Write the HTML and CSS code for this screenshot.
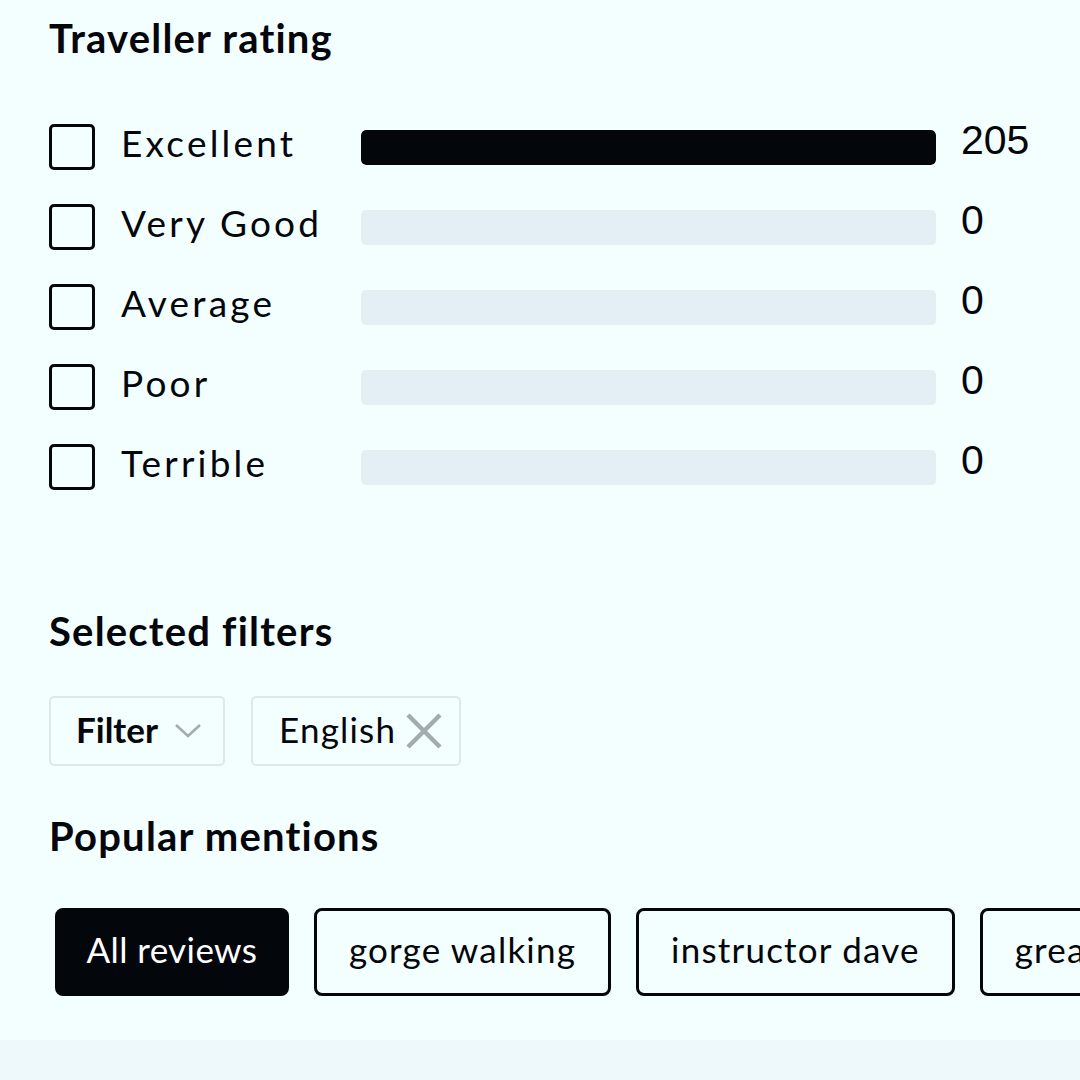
FILE: index.html
```html
<!DOCTYPE html>
<html lang="en">
<head>
<meta charset="utf-8">
<title>Traveller rating</title>
<link rel="stylesheet" href="styles.css">
</head>
<body>
<div class="page">
  <section class="panel">
    <h2 class="title title-first">Traveller rating</h2>
    <ul class="ratings">
      <li class="row">
        <span class="box"></span>
        <span class="label">Excellent</span>
        <span class="bar"><span class="fill" style="width:100%"></span></span>
        <span class="count">205</span>
      </li>
      <li class="row">
        <span class="box"></span>
        <span class="label">Very Good</span>
        <span class="bar"><span class="fill" style="width:0%"></span></span>
        <span class="count">0</span>
      </li>
      <li class="row">
        <span class="box"></span>
        <span class="label">Average</span>
        <span class="bar"><span class="fill" style="width:0%"></span></span>
        <span class="count">0</span>
      </li>
      <li class="row">
        <span class="box"></span>
        <span class="label">Poor</span>
        <span class="bar"><span class="fill" style="width:0%"></span></span>
        <span class="count">0</span>
      </li>
      <li class="row">
        <span class="box"></span>
        <span class="label">Terrible</span>
        <span class="bar"><span class="fill" style="width:0%"></span></span>
        <span class="count">0</span>
      </li>
    </ul>

    <h2 class="title title-filters">Selected filters</h2>
    <div class="filters">
      <button class="fchip fchip-filter">Filter
        <svg class="chev" width="28" height="16" viewBox="0 0 28 16"><path d="M2 2 L14 13 L26 2" fill="none" stroke="#a3abaf" stroke-width="2.5"/></svg>
      </button>
      <button class="fchip fchip-lang">English
        <svg class="xicon" width="36" height="36" viewBox="0 0 36 36"><path d="M2 2 L34 34 M34 2 L2 34" fill="none" stroke="#a3abaf" stroke-width="4.5"/></svg>
      </button>
    </div>

    <h2 class="title title-mentions">Popular mentions</h2>
    <div class="mentions">
      <button class="mchip mchip-active">All reviews</button>
      <button class="mchip">gorge walking</button>
      <button class="mchip">instructor dave</button>
      <button class="mchip">great day</button>
    </div>
  </section>
  <div class="strip"></div>
</div>
</body>
</html>
```

FILE: styles.css
```css
html, body {
  margin: 0;
  padding: 0;
  background: #f3fefe;
}
body {
  font-family: "Lato", "Liberation Sans", sans-serif;
  color: #03060a;
  width: 1080px;
  height: 1080px;
  overflow: hidden;
}
.page {
  display: flex;
  flex-direction: column;
  height: 1080px;
}
.panel {
  padding: 14px 0 0 49px;
  height: 1040px;
  box-sizing: border-box;
  overflow: hidden;
}
.title {
  margin: 0;
  font-size: 40px;
  line-height: 48px;
  font-weight: 700;
  letter-spacing: 1.2px;
}
.ratings {
  list-style: none;
  margin: 45px 0 0 0;
  padding: 0;
}
.row {
  display: grid;
  grid-template-columns: 72px 240px 575px auto;
  align-items: center;
  height: 80px;
}
.box {
  width: 46px;
  height: 46px;
  box-sizing: border-box;
  border: 3px solid #03060a;
  border-radius: 5px;
}
.label {
  font-size: 37px;
  letter-spacing: 3.2px;
  padding-bottom: 10px;
  white-space: nowrap;
}
.bar {
  display: block;
  height: 35px;
  background: #e3eef5;
  border-radius: 5px;
  overflow: hidden;
}
.fill {
  display: block;
  height: 100%;
  background: #03060a;
  border-radius: 5px;
}
.count {
  font-family: "Liberation Sans", Arial, sans-serif;
  font-size: 41px;
  margin-left: 25px;
  padding-bottom: 14px;
}
.title-filters {
  margin-top: 100px;
}
.filters {
  display: flex;
  gap: 26px;
  margin-top: 41px;
}
.fchip {
  display: flex;
  align-items: center;
  height: 70px;
  box-sizing: border-box;
  border: 2px solid #dde8ee;
  border-radius: 5px;
  background: transparent;
  font-family: inherit;
  font-size: 35px;
  color: #03060a;
  padding: 0 18px 4px 25px;
  white-space: nowrap;
}
.fchip-filter {
  font-weight: 700;
  width: 176px;
}
.fchip-lang {
  width: 210px;
  letter-spacing: 1.2px;
  padding-left: 26px;
}
.chev {
  flex: none;
  margin-left: 16px;
  margin-top: 4px;
}
.xicon {
  flex: none;
  margin-left: 10px;
  margin-top: 4px;
}
.title-mentions {
  margin-top: 46px;
}
.mentions {
  display: flex;
  gap: 25px;
  margin-top: 48px;
  margin-left: 6px;
  white-space: nowrap;
}
.mchip {
  flex: none;
  height: 88px;
  box-sizing: border-box;
  border: 3px solid #03060a;
  border-radius: 8px;
  background: transparent;
  font-family: inherit;
  font-size: 35px;
  letter-spacing: 1.2px;
  color: #03060a;
  padding: 0 32px 6px 32px;
}
.mchip-active {
  background: #03060a;
  color: #ffffff;
  letter-spacing: 0.4px;
  padding: 0 28.5px 6px 28.5px;
}
.strip {
  height: 40px;
  background: #eef9fc;
}
```
